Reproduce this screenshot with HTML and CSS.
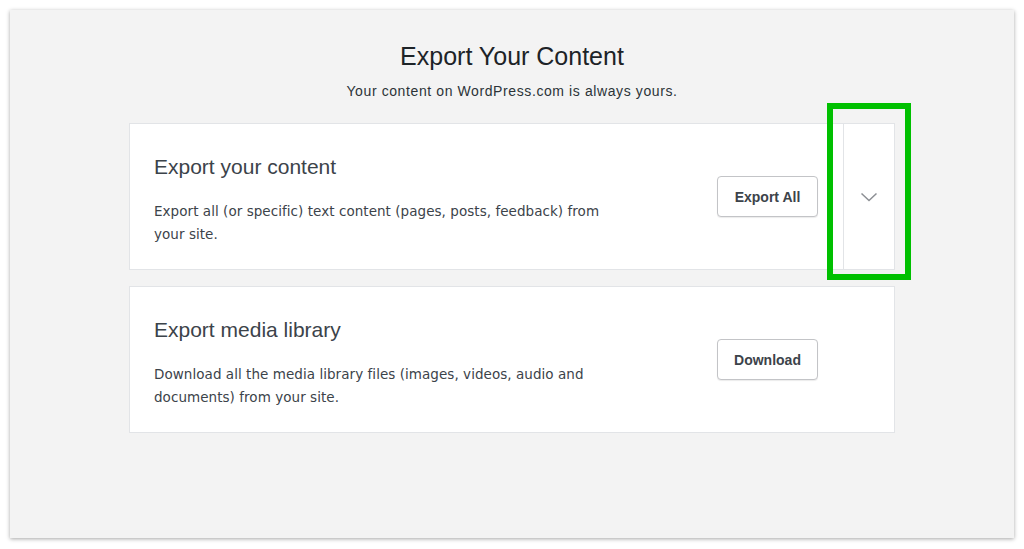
FILE: index.html
```html
<!DOCTYPE html>
<html lang="en">
<head>
    <meta charset="UTF-8">
    <meta name="viewport" content="width=device-width, initial-scale=1.0">
    <title>Export Your Content</title>
    <link rel="stylesheet" href="styles.css">
</head>
<body>
    <div class="frame">
        <main class="export">
            <header class="export-header">
                <h1>Export Your Content</h1>
                <p class="subtitle">Your content on WordPress.com is always yours.</p>
            </header>

            <section class="card card-expandable">
                <div class="card-main">
                    <div class="card-text">
                        <h2>Export your content</h2>
                        <p>Export all (or specific) text content (pages, posts, feedback) from your site.</p>
                    </div>
                    <button class="btn">Export All</button>
                </div>
                <div class="card-toggle">
                    <svg width="18" height="10" viewBox="0 0 18 10">
                        <path d="M1.5 1.5 L9 8.5 L16.5 1.5" fill="none" stroke="#8c8f94" stroke-width="1.5"/>
                    </svg>
                </div>
                <div class="highlight"></div>
            </section>

            <section class="card">
                <div class="card-main card-main-wide">
                    <div class="card-text">
                        <h2>Export media library</h2>
                        <p>Download all the media library files (images, videos, audio and documents) from your site.</p>
                    </div>
                    <button class="btn">Download</button>
                </div>
            </section>
        </main>
    </div>
</body>
</html>
```

FILE: styles.css
```css
* {
    margin: 0;
    padding: 0;
    box-sizing: border-box;
}

body {
    background: #ffffff;
    font-family: "Liberation Sans", Arial, sans-serif;
    color: #3c434a;
    padding: 10px;
}

.frame {
    height: 528px;
    background: #f3f3f3;
    box-shadow: 0 1px 4px rgba(0, 0, 0, 0.35);
    padding-top: 31px;
}

.export {
    width: 766px;
    margin: 0 auto;
}

.export-header {
    text-align: center;
    margin-bottom: 22px;
}

.export-header h1 {
    font-size: 25px;
    font-weight: 400;
    line-height: 30px;
    color: #1d2327;
}

.subtitle {
    font-size: 14px;
    line-height: 20px;
    margin-top: 10px;
    letter-spacing: 0.6px;
    color: #2c3338;
}

.card {
    position: relative;
    display: flex;
    background: #ffffff;
    border: 1px solid #e2e4e7;
    height: 147px;
    margin-bottom: 16px;
}

.card-main {
    flex: 1;
    display: flex;
    align-items: center;
    justify-content: space-between;
    padding: 0 25px 0 24px;
}

.card-main-wide {
    padding-right: 76px;
}

.card-text {
    padding-top: 6px;
}

.card-text h2 {
    font-size: 21px;
    font-weight: 400;
    line-height: 28px;
    color: #3c434a;
    margin-bottom: 19px;
}

.card-text p {
    font-family: "DejaVu Sans", "Liberation Sans", sans-serif;
    font-size: 13.5px;
    line-height: 23px;
    letter-spacing: 0.05px;
    max-width: 460px;
    color: #3c434a;
}

.btn {
    font-family: inherit;
    font-size: 14px;
    font-weight: 700;
    color: #3c434a;
    background: #ffffff;
    border: 1px solid #c3c4c7;
    border-radius: 4px;
    box-shadow: 0 1px 1px rgba(0, 0, 0, 0.08);
    height: 41px;
    width: 101px;
}

.card-toggle {
    width: 51px;
    border-left: 1px solid #e2e4e7;
    display: flex;
    align-items: center;
    justify-content: center;
}

.highlight {
    position: absolute;
    left: 697px;
    top: -21px;
    width: 84px;
    height: 177px;
    border: 6px solid #00c000;
}
```
